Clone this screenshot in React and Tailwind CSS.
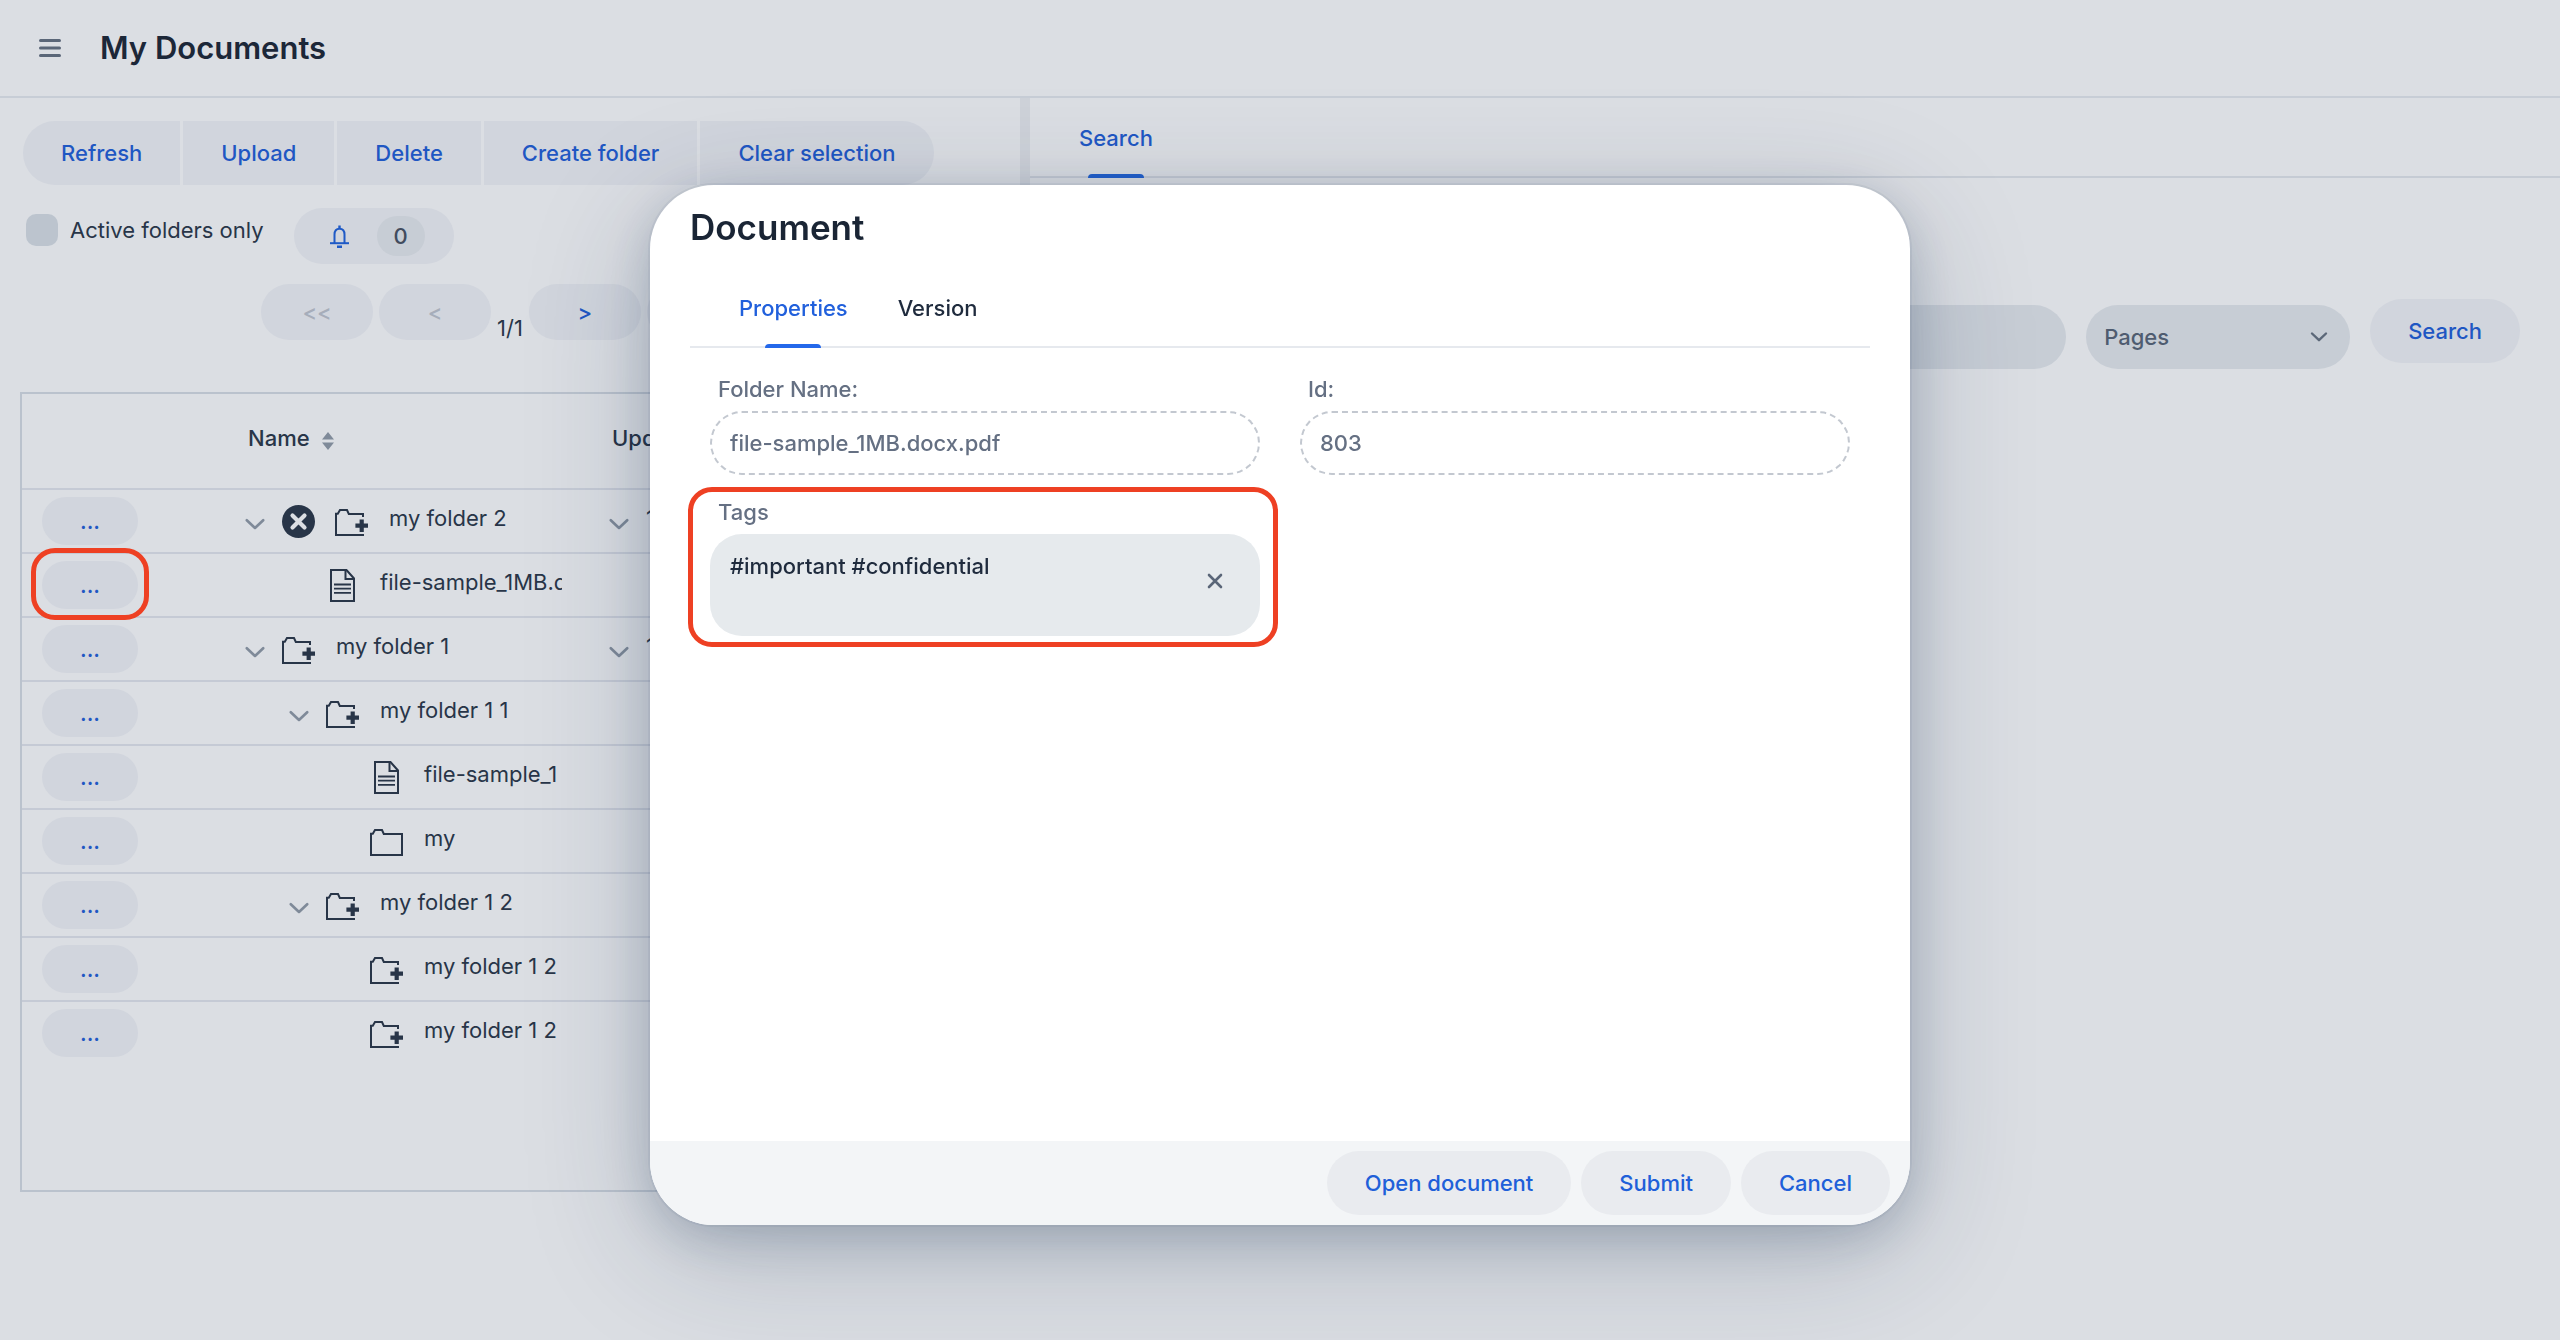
const rows = [
  { level: 0, chevron: true, remove: true, icon: "folder-plus", name: "my folder 2", updated: "1" },
  { level: 1, icon: "file", name: "file-sample_1MB.docx.pdf", marked: true },
  { level: 0, chevron: true, icon: "folder-plus", name: "my folder 1", updated: "1" },
  { level: 1, chevron: true, icon: "folder-plus", name: "my folder 1 1" },
  { level: 2, icon: "file", name: "file-sample_1" },
  { level: 2, icon: "folder", name: "my" },
  { level: 1, chevron: true, icon: "folder-plus", name: "my folder 1 2" },
  { level: 2, icon: "folder-plus", name: "my folder 1 2" },
  { level: 2, icon: "folder-plus", name: "my folder 1 2" },
];

const indents = ["pl-[15px]", "pl-[59px]", "pl-[103px]"];

function Chevron() {
  return (
    <svg width="20" height="24" viewBox="0 0 20 24" fill="none" stroke="#7f8a99" strokeWidth="2.6" strokeLinecap="round" strokeLinejoin="round" aria-hidden="true">
      <path d="M1.8 11.2 10 19l8.2-7.8" />
    </svg>
  );
}

function SmallChevron() {
  return (
    <svg width="18" height="12" viewBox="0 0 18 12" fill="none" stroke="#5c6879" strokeWidth="2.4" strokeLinecap="round" strokeLinejoin="round" aria-hidden="true">
      <path d="M2 2.5 9 9.2l7-6.7" />
    </svg>
  );
}

function ItemIcon({ type }) {
  if (type === "file") {
    return (
      <svg width="34" height="33" viewBox="0 0 34 33" fill="none" stroke="#283548" strokeWidth="2" aria-hidden="true">
        <path d="M5 1h15.5L28 9.500V32H5z" />
        <path d="M19.500 1v9H28" />
        <path d="M8 15.500h17M8 19.700h17M8 23.900h17" strokeWidth="1.800" />
      </svg>
    );
  }
  if (type === "folder") {
    return (
      <svg width="34" height="29" viewBox="0 -2 34 29" fill="none" stroke="#283548" strokeWidth="2" aria-hidden="true">
        <path d="M1 26V4.800h1.800L5 1h7l1.800 4H32v21z" />
      </svg>
    );
  }
  return (
    <svg width="34" height="29" viewBox="0 -2 34 29" fill="none" stroke="#283548" strokeWidth="2" aria-hidden="true">
      <path d="M28 8V5H13.800L12 1H5L2.800 4.800H1V26h28" />
      <path d="M20.400 16.700h12.600M26.700 10.400v12.600" strokeWidth="4.200" />
    </svg>
  );
}

function RemoveIcon() {
  return (
    <svg width="33" height="33" viewBox="0 0 33 33" aria-hidden="true">
      <circle cx="16.500" cy="16.500" r="16.500" fill="#283548" />
      <path d="m10.500 10.500 12 12m0-12-12 12" stroke="#dbdee3" strokeWidth="4.200" strokeLinecap="round" />
    </svg>
  );
}

function BellIcon() {
  return (
    <svg width="19" height="23" viewBox="0 0 19 23" fill="none" stroke="#1f5ac6" strokeWidth="2" aria-hidden="true">
      <path d="M4.500 18V9.500c0-3.600 1.700-5.800 5-5.800s5 2.200 5 5.800V18" />
      <path d="M0 18.200h19" />
      <path d="M9.500 .4v3.200M7 21.800h5" strokeWidth="2.400" />
    </svg>
  );
}

function Tab({ active, children, blue, bar }) {
  return (
    <button type="button" role="tab" aria-selected={!!active} className={`flex h-20 flex-col items-center px-[25px] ${active ? blue : "text-[#1f2b3d]"}`}>
      <span className="flex h-20 shrink-0 items-center">{children}</span>
      {active && <span className={`-mt-1 h-1 w-14 shrink-0 rounded-t ${bar}`} />}
    </button>
  );
}

function Pager({ children, disabled, label }) {
  return (
    <button type="button" aria-label={label} disabled={disabled} className="h-14 w-28 rounded-full bg-[#d1d5dd] font-medium text-[#1f57c3] disabled:text-[#a6adba]">
      {children}
    </button>
  );
}

function FooterButton({ children }) {
  return (
    <button type="button" className="h-16 rounded-full bg-[#e9ebef] px-[38px] font-medium text-[#205fd9]">
      {children}
    </button>
  );
}

function Dialog() {
  return (
    <div className="fixed inset-0 flex justify-center pt-[185px] pb-[115px]">
      <section
        role="dialog"
        aria-labelledby="dialog-title"
        className="flex w-[1260px] max-w-full flex-col overflow-hidden rounded-[64px] bg-white shadow-[0_0_0_2px_rgba(24,45,78,0.05),0_12px_48px_-2px_rgba(24,45,78,0.22),0_30px_128px_-2px_rgba(24,45,78,0.22)]"
      >
        <div className="flex-1 px-10 pt-5">
          <h2 id="dialog-title" className="pb-[19px] text-[35px] leading-[44px] font-semibold text-[#1a2535]">Document</h2>
          <div role="tablist" className="flex h-20 border-b-2 border-[#e6e9ee] px-6 font-medium">
            <Tab active blue="text-[#2160dc]" bar="bg-[#2468ea]">Properties</Tab>
            <Tab>Version</Tab>
          </div>
          <div className="grid grid-cols-2 gap-x-10 gap-y-[22px] px-5 pt-[26px] font-medium">
            <div className="flex flex-col gap-[7px]">
              <label htmlFor="folder-name" className="pl-2 text-[#657083]">Folder Name:</label>
              <input id="folder-name" readOnly defaultValue="file-sample_1MB.docx.pdf" className="h-16 w-full rounded-[32px] border-2 border-dashed border-[#c3c8d0] px-[18px] text-[#657083] outline-none" />
            </div>
            <div className="flex flex-col gap-[7px]">
              <label htmlFor="doc-id" className="pl-2 text-[#657083]">Id:</label>
              <input id="doc-id" readOnly defaultValue="803" className="h-16 w-full rounded-[32px] border-2 border-dashed border-[#c3c8d0] px-[18px] text-[#657083] outline-none" />
            </div>
            <div className="relative flex flex-col gap-[7px]">
              <label htmlFor="tags" className="pl-2 text-[#657083]">Tags</label>
              <div className="flex h-[102px] items-start rounded-[32px] bg-[#e6eaed] pr-9">
                <textarea id="tags" defaultValue="#important #confidential" className="h-full flex-1 resize-none overflow-hidden bg-transparent pt-[17px] pl-5 text-[#1f2b3d] outline-none" />
                <button type="button" aria-label="Clear tags" className="mt-[38px] p-px">
                  <svg width="16" height="16" viewBox="0 0 16 16" stroke="#5a6678" strokeWidth="2.600" strokeLinecap="round" aria-hidden="true">
                    <path d="m2 2 12 12M14 2 2 14" />
                  </svg>
                </button>
              </div>
              <span className="pointer-events-none absolute -top-2.5 -right-[18px] -bottom-[11px] -left-[22px] rounded-3xl border-[5px] border-[#ee4023]" />
            </div>
          </div>
        </div>
        <footer className="flex justify-end gap-2.5 bg-[#f3f5f7] px-5 py-2.5">
          <FooterButton>Open document</FooterButton>
          <FooterButton>Submit</FooterButton>
          <FooterButton>Cancel</FooterButton>
        </footer>
      </section>
    </div>
  );
}

function DocumentTable() {
  return (
    <div className="mt-[52px] flex-1 overflow-hidden border-2 border-[#bac2cd]">
      <table className="w-full table-fixed border-separate border-spacing-0 text-left">
        <colgroup>
          <col className="w-[208px]" />
          <col className="w-[364px]" />
          <col />
        </colgroup>
        <thead>
          <tr>
            <th className="h-24 border-b-2 border-[#c5cad5]" aria-label="Actions" />
            <th className="h-24 border-b-2 border-[#c5cad5] pl-[18px] font-medium">
              <div className="flex items-center gap-3">
                <span className="pb-1.5">Name</span>
                <svg width="12" height="18" viewBox="0 0 12 18" fill="#7f8a99" aria-hidden="true">
                  <path d="M0 7.500 6 0l6 7.500zM0 10.500 6 18l6-7.500z" />
                </svg>
              </div>
            </th>
            <th className="h-24 border-b-2 border-[#c5cad5] pl-[18px] font-medium">
              <div className="pb-1.5">Updated</div>
            </th>
          </tr>
        </thead>
        <tbody className="[&>tr:last-child>td]:border-transparent">
          {rows.map((row, i) => (
            <tr key={i}>
              <td className="h-16 border-b-2 border-[#c5cad5] pl-5">
                <div className="relative flex w-24">
                  <button type="button" aria-label={`Actions for ${row.name}`} className="h-12 w-24 rounded-full bg-[#d1d5dd] font-medium text-[#1f57c3]">...</button>
                  {row.marked && <span className="pointer-events-none absolute -inset-x-[11px] -top-[13px] -bottom-[11px] rounded-3xl border-[5px] border-[#ee4023]" />}
                </div>
              </td>
              <td className="h-16 border-b-2 border-[#c5cad5] pr-8">
                <div className={`flex items-center overflow-hidden whitespace-nowrap ${indents[row.level]}`}>
                  <span className="w-[37px] shrink-0">{row.chevron && <Chevron />}</span>
                  {row.remove && <span className="w-[53px] shrink-0"><RemoveIcon /></span>}
                  <span className="w-[34px] shrink-0"><ItemIcon type={row.icon} /></span>
                  <span className="pb-1.5 pl-5">{row.name}</span>
                </div>
              </td>
              <td className="h-16 border-b-2 border-[#c5cad5] pl-[15px]">
                {row.updated && (
                  <div className="flex items-center">
                    <span className="w-[37px] shrink-0"><Chevron /></span>
                    <span className="pb-1.5">{row.updated}</span>
                  </div>
                )}
              </td>
            </tr>
          ))}
        </tbody>
      </table>
    </div>
  );
}

export default function App() {
  return (
    <div className="flex min-h-screen flex-col bg-[#dbdee3] font-['Inter',sans-serif] text-[22px] leading-[30px] text-[#283548] [&_svg]:block">
      <header className="flex h-[98px] items-center gap-[39px] border-b-2 border-[#c7cdd6] pl-[39px]">
        <button type="button" aria-label="Menu">
          <svg width="22" height="18" viewBox="0 0 22 18" fill="#5a6678" aria-hidden="true">
            <rect width="22" height="3" rx="1.500" />
            <rect y="7.500" width="22" height="3" rx="1.500" />
            <rect y="15" width="22" height="3" rx="1.500" />
          </svg>
        </button>
        <h1 className="text-[31px] leading-10 font-semibold text-[#1c2738]">My Documents</h1>
      </header>

      <main className="mb-32 grid flex-1 grid-cols-[2fr_10px_3fr]">
        <section className="flex min-w-0 flex-col px-5 pt-[23px] pb-5">
          <div className="ml-[3px] flex gap-[3px] self-start overflow-hidden rounded-full font-medium text-[#1f57c3]">
            {["Refresh", "Upload", "Delete", "Create folder", "Clear selection"].map((label) => (
              <button key={label} type="button" className="h-16 bg-[#d1d5dd] px-[38px] whitespace-nowrap">{label}</button>
            ))}
          </div>

          <div className="mt-[23px] flex items-start gap-[30px] pl-1.5">
            <label className="mt-1.5 flex items-center gap-3">
              <input type="checkbox" className="size-8 appearance-none rounded-[10px] bg-[#bcc4ce]" />
              <span>Active folders only</span>
            </label>
            <button type="button" aria-label="Notifications" className="flex h-14 items-center gap-7 rounded-full bg-[#d1d5dd] pr-[29px] pl-9">
              <BellIcon />
              <span className="flex h-10 w-12 items-center justify-center rounded-full bg-[#c7cdd5] font-medium text-[#414c5e]">0</span>
            </button>
          </div>

          <div className="mt-5 flex items-end justify-center gap-1.5">
            <Pager disabled label="First page">&lt;&lt;</Pager>
            <Pager disabled label="Previous page">&lt;</Pager>
            <span className="leading-6">1/1</span>
            <Pager label="Next page">&gt;</Pager>
            <Pager label="Last page">&gt;&gt;</Pager>
          </div>

          <DocumentTable />
        </section>

        <div className="bg-[#ced2d9]" />

        <section className="min-w-0">
          <div role="tablist" className="flex h-20 border-b-2 border-[#c5cbd4] px-6 font-medium">
            <Tab active blue="text-[#1f57c3]" bar="bg-[#2260cc]">Search</Tab>
          </div>
          <form className="mt-[121px] flex items-end gap-5 px-10 font-medium" onSubmit={(e) => e.preventDefault()}>
            <input aria-label="Search text" className="h-16 min-w-0 flex-1 rounded-full bg-[#c7cdd5] px-5 outline-none" />
            <div className="relative w-[264px]">
              <select aria-label="Search in" className="block h-16 w-full appearance-none rounded-full bg-[#c7cdd5] px-[18px] text-[#4f5c70] outline-none">
                <option>Pages</option>
              </select>
              <span className="pointer-events-none absolute inset-y-0 right-[22px] flex items-center"><SmallChevron /></span>
            </div>
            <button type="submit" className="mb-1.5 h-16 rounded-full bg-[#d1d5dd] px-[38px] text-[#1f57c3]">Search</button>
          </form>
        </section>
      </main>

      <Dialog />
    </div>
  );
}
